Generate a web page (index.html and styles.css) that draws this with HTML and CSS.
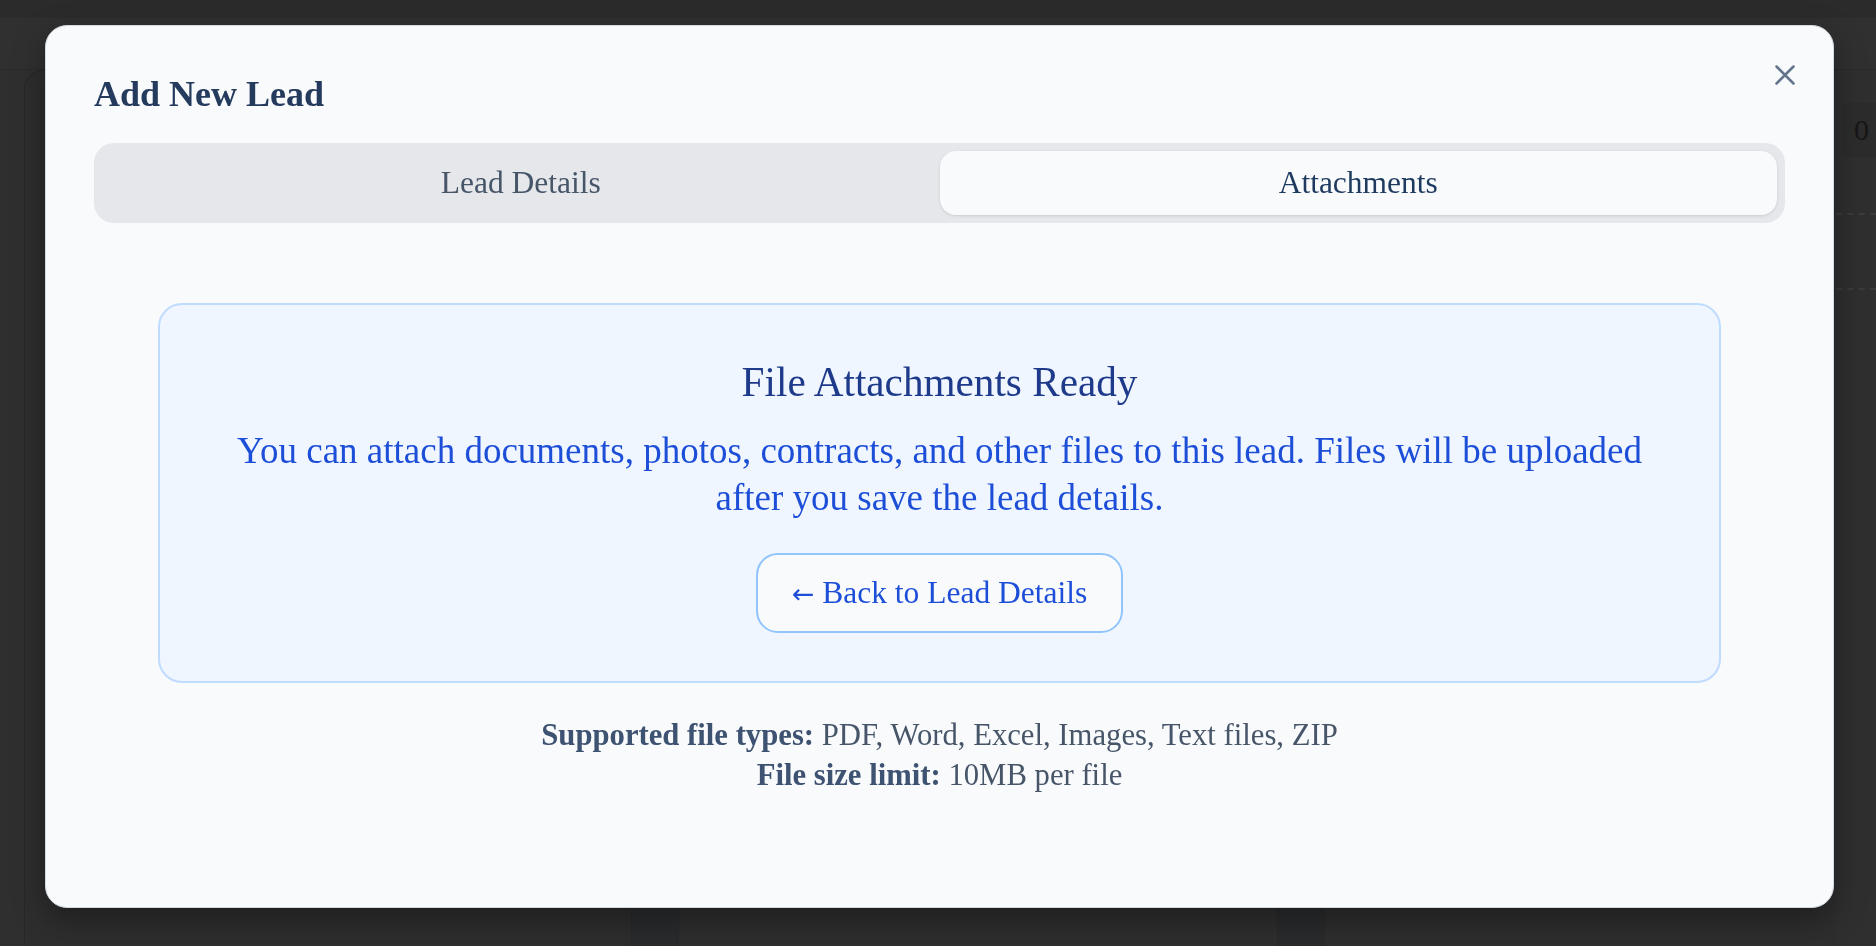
FILE: index.html
```html
<!DOCTYPE html>
<html lang="en">
<head>
<meta charset="utf-8">
<title>Add New Lead</title>
<link rel="stylesheet" href="styles.css">
</head>
<body>
<div class="page">
  <div class="topbar"></div>
  <div class="subheader"></div>
  <main class="board">
    <section class="board-main">
      <div class="lane"></div>
      <div class="lane-gap"></div>
      <div class="lane"></div>
      <div class="lane-gap"></div>
      <div class="lane"></div>
    </section>
    <aside class="board-side">
      <div class="stat">0</div>
      <div class="dashed"></div>
      <div class="dashed dashed-low"></div>
    </aside>
  </main>
</div>

<div class="overlay">
  <div class="modal" role="dialog" aria-labelledby="modal-title">
    <button class="close" aria-label="Close">
      <svg width="20" height="20" viewBox="0 0 20 20" fill="none" stroke="currentColor" stroke-width="2.5" stroke-linecap="round"><path d="M1.5 1.5 L18.5 18.5 M18.5 1.5 L1.5 18.5"/></svg>
    </button>
    <h2 class="modal-title" id="modal-title">Add New Lead</h2>
    <div class="tabs">
      <div class="tab">Lead Details</div>
      <div class="tab tab-active">Attachments</div>
    </div>
    <div class="tab-body">
      <div class="info-box">
        <h3 class="info-title">File Attachments Ready</h3>
        <p class="info-text">You can attach documents, photos, contracts, and other files to this lead. Files will be uploaded after you save the lead details.</p>
        <button class="back-btn"><span class="arrow">←</span> Back to Lead Details</button>
      </div>
      <div class="file-notes">
        <div><strong>Supported file types:</strong> PDF, Word, Excel, Images, Text files, ZIP</div>
        <div><strong>File size limit:</strong> 10MB per file</div>
      </div>
    </div>
  </div>
</div>
</body>
</html>
```

FILE: styles.css
```css
html, body {
  margin: 0;
  padding: 0;
  height: 100%;
}

body {
  background: #2f2f2f;
  font-family: "Liberation Serif", "Times New Roman", serif;
  overflow: hidden;
}

/* ---------- dimmed background page ---------- */
.page {
  display: flex;
  flex-direction: column;
  height: 100vh;
}

.topbar {
  height: 18px;
  background: #2b2b2b;
}

.subheader {
  height: 51px;
  background: #303030;
  border-bottom: 1px solid #2a2a2a;
}

.board {
  flex: 1;
  display: flex;
  padding-left: 24px;
}

.board-main {
  flex: 1;
  display: grid;
  grid-template-columns: 606px 48px 598px 48px 1fr;
  background: #2e2e2e;
  border-left: 1px solid #282828;
  border-top: 1px solid #282828;
  border-top-left-radius: 20px;
}

.lane-gap {
  background: #2a2b2d;
  border-left: 1px solid #292929;
  border-right: 1px solid #292929;
}

.board-side {
  width: 40px;
  padding-top: 33px;
  display: flex;
  flex-direction: column;
}

.stat {
  height: 54px;
  margin-left: 6px;
  background: #2c2c2c;
  border-radius: 6px 0 0 6px;
  color: #161616;
  font-size: 30px;
  line-height: 54px;
  padding-left: 12px;
}

.dashed {
  margin-top: 56px;
  border-top: 2px dashed #3b3b3b;
}

.dashed-low {
  margin-top: 73px;
}

/* ---------- modal ---------- */
.overlay {
  position: fixed;
  inset: 0;
  display: flex;
  align-items: flex-start;
  justify-content: flex-start;
  padding: 25px 0 0 45px;
}

.modal {
  position: relative;
  box-sizing: border-box;
  width: 1789px;
  height: 883px;
  padding: 46px 48px 0;
  background: #f8fafc;
  border: 1px solid #d3d9e1;
  border-radius: 22px;
  box-shadow: 0 12px 32px rgba(0, 0, 0, 0.35);
}

.close {
  position: absolute;
  top: 39px;
  right: 38px;
  width: 20px;
  height: 20px;
  padding: 0;
  border: 0;
  background: none;
  color: #64748b;
  display: flex;
}

.modal-title {
  margin: 0 0 27px;
  font-size: 36px;
  line-height: 44px;
  font-weight: 700;
  color: #243b5e;
}

.tabs {
  display: grid;
  grid-template-columns: 1fr 1fr;
  padding: 8px;
  background: #e5e7eb;
  border-radius: 20px;
}

.tab {
  height: 64px;
  line-height: 64px;
  text-align: center;
  font-size: 31.5px;
  color: #475569;
  border-radius: 16px;
}

.tab-active {
  background: #f8fafc;
  color: #1e3a5f;
  box-shadow: 0 1px 3px rgba(15, 23, 42, 0.12);
}

.tab-body {
  padding: 80px 64px 0;
}

.info-box {
  background: #eff6ff;
  border: 2px solid #bfdbfe;
  border-radius: 24px;
  padding: 53px 56px 48px;
  text-align: center;
}

.info-title {
  margin: 0;
  font-size: 41.2px;
  line-height: 48px;
  font-weight: 400;
  color: #1e3a8a;
}

.info-text {
  margin: 21px 0 32px;
  font-size: 37px;
  line-height: 47px;
  color: #1d4ed8;
}

.back-btn {
  font-family: inherit;
  font-size: 31.5px;
  line-height: 41px;
  padding: 17px 34px;
  background: #f8fafc;
  color: #1d4ed8;
  border: 2px solid #93c5fd;
  border-radius: 22px;
}

.arrow {
  font-family: "DejaVu Sans", sans-serif;
  font-size: 27px;
}

.file-notes {
  margin-top: 32px;
  text-align: center;
  font-size: 30.7px;
  line-height: 40px;
  color: #475569;
}

.file-notes strong {
  color: #3e5272;
}
```
